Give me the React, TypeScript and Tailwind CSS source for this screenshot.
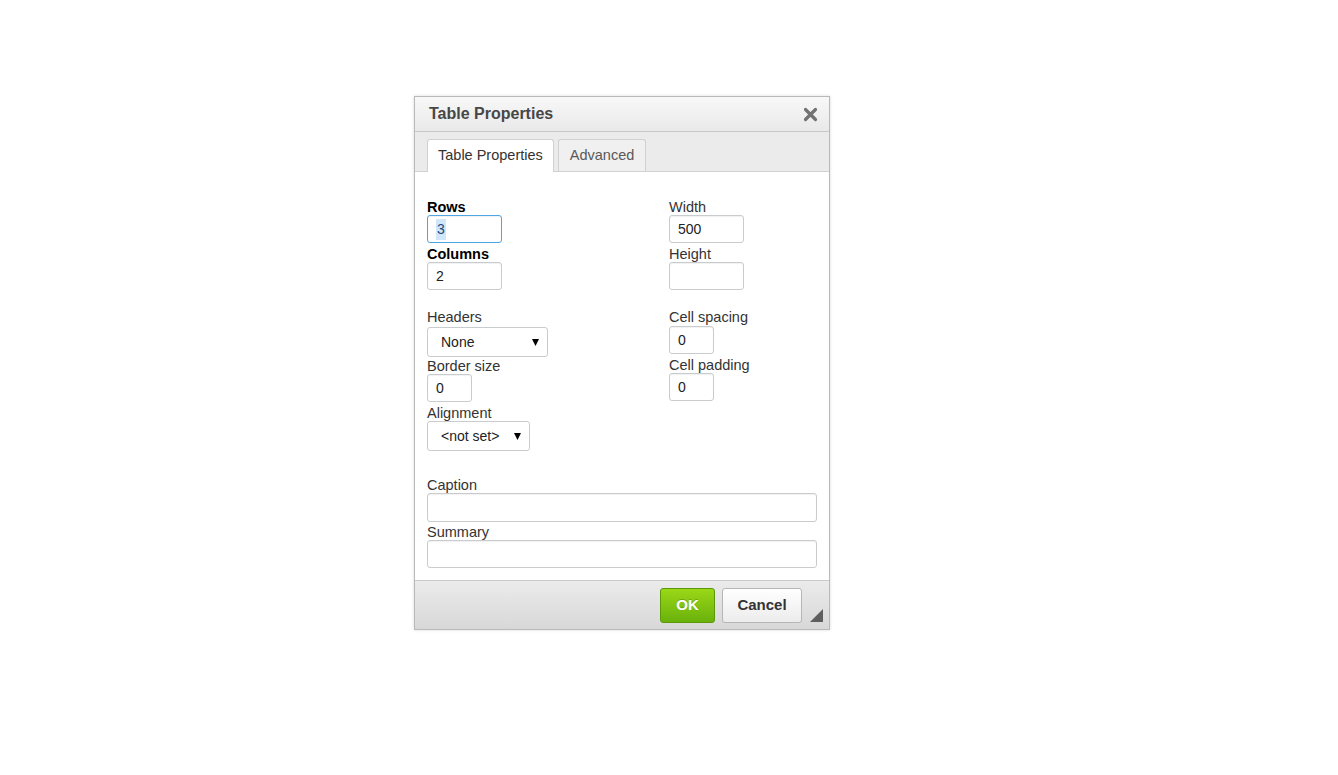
import React from 'react'

const font = { fontFamily: '"Liberation Sans", Arial, Helvetica, sans-serif' }

function Label({ children, bold = false, className = '' }: { children: React.ReactNode; bold?: boolean; className?: string }) {
  return (
    <div className={`leading-[15px] text-[14.5px] ${bold ? 'font-bold text-black' : 'text-[#333]'} ${className}`}>
      {children}
    </div>
  )
}

function TextBox({ value = '', width, height = 'h-[28px]' }: { value?: string; width: string; height?: string }) {
  return (
    <div
      className={`${width} ${height} flex items-center px-[8px] border border-[#c9cccf] rounded-[3px] bg-white shadow-[inset_0_1px_1px_rgba(0,0,0,0.06)] text-[14px] text-[#222]`}
    >
      {value}
    </div>
  )
}

function Select({ value, width }: { value: string; width: string }) {
  return (
    <div
      className={`${width} h-[30px] flex items-center justify-between pl-[13px] pr-[8px] border border-[#c9cccf] rounded-[3px] bg-white text-[14px] text-[#222]`}
    >
      <span>{value}</span>
      <svg width="7" height="7" viewBox="0 0 7 7">
        <polygon points="0,0 7,0 3.5,7" fill="#000" />
      </svg>
    </div>
  )
}

export default function App() {
  return (
    <div className="min-h-screen bg-white pt-[96px] pl-[414px]" style={font}>
      <div className="relative w-[416px] border border-[#b9b9b9] shadow-[0_0_3px_rgba(0,0,0,0.15)] bg-white">
        {/* title */}
        <div className="h-[35px] flex items-center justify-between pl-[14px] pr-[11px] border-b border-[#c8c8c8] bg-linear-to-b from-[#f8f8f8] to-[#e9e9e9]">
          <span className="text-[16px] font-bold text-[#474747]">Table Properties</span>
          <svg width="15" height="15" viewBox="0 0 15 15">
            <path d="M2.5 2.5 L12.5 12.5 M12.5 2.5 L2.5 12.5" stroke="#727272" strokeWidth="3.2" strokeLinecap="round" />
          </svg>
        </div>

        {/* tabs */}
        <div className="h-[40px] flex items-end gap-[4px] pl-[12px] bg-[#ebebeb] border-b border-[#d1d1d1]">
          <div className="h-[33px] -mb-px px-[10px] flex items-center border border-b-0 border-[#d1d1d1] rounded-t-[3px] bg-white text-[14.5px] text-[#333]">
            Table Properties
          </div>
          <div className="h-[32px] px-[11px] flex items-center border border-b-0 border-[#d1d1d1] rounded-t-[3px] bg-[#f0f0f0] text-[14.5px] text-[#595959]">
            Advanced
          </div>
        </div>

        {/* contents */}
        <div className="px-[12px] pt-[28px] pb-[12px]">
          <div className="grid grid-cols-[242px_1fr]">
            <div>
              <Label bold>Rows</Label>
              <div className="w-[75px] h-[28px] flex items-center px-[8px] border border-[#4ea6e5] rounded-[3px] bg-white shadow-[inset_0_1px_1px_rgba(0,0,0,0.06)] text-[14px]">
                <span className="bg-[#cfe6fb] text-[#1f4b78] px-px">3</span>
              </div>
              <Label bold className="mt-[4px]">Columns</Label>
              <TextBox value="2" width="w-[75px]" />

              <Label className="mt-[20px]">Headers</Label>
              <div className="mt-[2px]">
                <Select value="None" width="w-[121px]" />
              </div>
              <Label className="mt-[2px]">Border size</Label>
              <TextBox value="0" width="w-[45px]" />
              <Label className="mt-[4px]">Alignment</Label>
              <Select value="<not set>" width="w-[103px]" />
            </div>
            <div>
              <Label>Width</Label>
              <TextBox value="500" width="w-[75px]" />
              <Label className="mt-[4px]">Height</Label>
              <TextBox width="w-[75px]" />

              <Label className="mt-[20px]">Cell spacing</Label>
              <div className="mt-[1px]">
                <TextBox value="0" width="w-[45px]" />
              </div>
              <Label className="mt-[4px]">Cell padding</Label>
              <TextBox value="0" width="w-[45px]" />
            </div>
          </div>

          <Label className="mt-[27px]">Caption</Label>
          <TextBox width="w-full" height="h-[29px]" />
          <Label className="mt-[3px]">Summary</Label>
          <TextBox width="w-full" />
        </div>

        {/* footer */}
        <div className="h-[49px] flex items-center justify-end gap-[7px] pr-[27px] border-t border-[#c9c9c9] bg-linear-to-b from-[#ebebeb] to-[#d8d8d8]">
          <div className="w-[55px] h-[35px] flex items-center justify-center rounded-[3px] border border-[#5b9909] bg-linear-to-b from-[#9ad717] to-[#69b10b] text-[15px] font-bold text-white [text-shadow:0_-1px_0_rgba(0,0,0,0.2)]">
            OK
          </div>
          <div className="w-[80px] h-[35px] flex items-center justify-center rounded-[3px] border border-[#b6b6b6] bg-linear-to-b from-white to-[#ececec] text-[15px] font-bold text-[#333]">
            Cancel
          </div>
        </div>

        <svg className="absolute right-[6px] bottom-[7px]" width="13" height="13" viewBox="0 0 13 13">
          <polygon points="13,0 13,13 0,13" fill="#5e5e5e" />
        </svg>
      </div>
    </div>
  )
}
